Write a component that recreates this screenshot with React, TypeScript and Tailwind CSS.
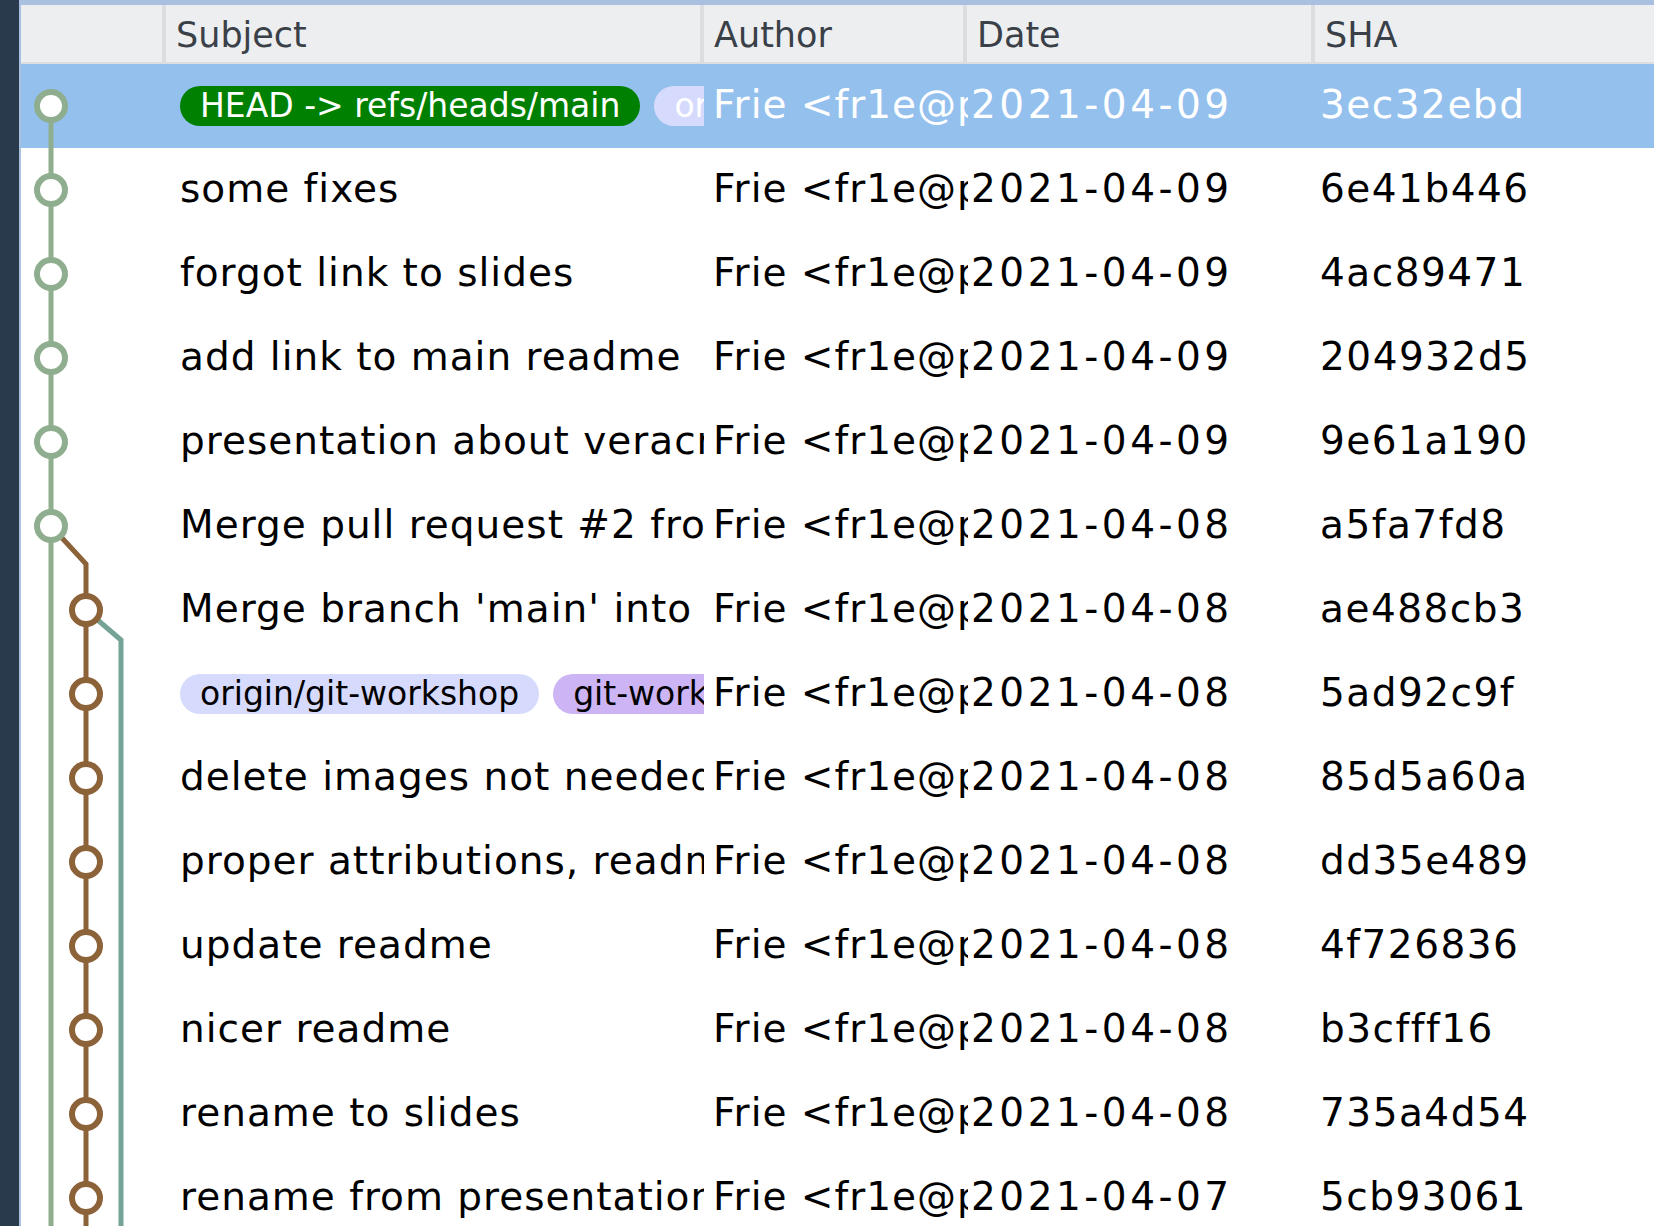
import React from "react";

const rows = [
  { s: "", a: "Frie <fr1e@protonmail", d: "2021-04-09", h: "3ec32ebd", sel: true, badges: "head" },
  { s: "some fixes", a: "Frie <fr1e@protonmail", d: "2021-04-09", h: "6e41b446" },
  { s: "forgot link to slides", a: "Frie <fr1e@protonmail", d: "2021-04-09", h: "4ac89471" },
  { s: "add link to main readme", a: "Frie <fr1e@protonmail", d: "2021-04-09", h: "204932d5" },
  { s: "presentation about veracrypt", a: "Frie <fr1e@protonmail", d: "2021-04-09", h: "9e61a190" },
  { s: "Merge pull request #2 from fr1e/git-workshop", a: "Frie <fr1e@protonmail", d: "2021-04-08", h: "a5fa7fd8" },
  { s: "Merge branch 'main' into git-workshop", a: "Frie <fr1e@protonmail", d: "2021-04-08", h: "ae488cb3" },
  { s: "", a: "Frie <fr1e@protonmail", d: "2021-04-08", h: "5ad92c9f", badges: "ws" },
  { s: "delete images not needed", a: "Frie <fr1e@protonmail", d: "2021-04-08", h: "85d5a60a" },
  { s: "proper attributions, readme", a: "Frie <fr1e@protonmail", d: "2021-04-08", h: "dd35e489" },
  { s: "update readme", a: "Frie <fr1e@protonmail", d: "2021-04-08", h: "4f726836" },
  { s: "nicer readme", a: "Frie <fr1e@protonmail", d: "2021-04-08", h: "b3cfff16" },
  { s: "rename to slides", a: "Frie <fr1e@protonmail", d: "2021-04-08", h: "735a4d54" },
  { s: "rename from presentation", a: "Frie <fr1e@protonmail", d: "2021-04-07", h: "5cb93061" },
];

const G = "#8fae8f", B = "#8c6239", T = "#76a398";

function Graph() {
  const cy = (i: number) => 42 + 84 * i;
  const H = 84 * 14;
  const nodes = [];
  for (let i = 0; i <= 5; i++) nodes.push({ x: 30, y: cy(i), c: G });
  for (let i = 6; i <= 13; i++) nodes.push({ x: 65, y: cy(i), c: B });
  return (
    <svg width="120" height={H} className="absolute left-0 top-0" style={{ pointerEvents: "none" }}>
      <line x1="30" y1={cy(0)} x2="30" y2={H} stroke={G} strokeWidth="5" />
      <polyline points={`30,${cy(5)} 65,${cy(5) + 38} 65,${H}`} fill="none" stroke={B} strokeWidth="5" />
      <polyline points={`65,${cy(6)} 100,${cy(6) + 30} 100,${H}`} fill="none" stroke={T} strokeWidth="5" />
      {nodes.map((n, i) => (
        <circle key={i} cx={n.x} cy={n.y} r="14" fill="white" stroke={n.c} strokeWidth="6" />
      ))}
    </svg>
  );
}

export default function App() {
  return (
    <div className="flex w-[1654px] h-[1226px] overflow-hidden bg-white" style={{ fontFamily: '"DejaVu Sans", sans-serif' }}>
      <div className="w-[19px] shrink-0 bg-[#283a4c]" />
      <div className="flex-1 flex flex-col border-t-[5px] border-[#a9c0e0] border-l-2 border-l-[#a9c0e0]">
        <div className="flex h-[59px] bg-[#eceef0] border-b-2 border-[#dcdde0] text-[35px] text-[#3a4048]">
          <div className="w-[145px] shrink-0 border-r-4 border-[#dcdde0]" />
          <div className="w-[538px] shrink-0 border-r-4 border-[#dcdde0] pl-[10px] flex items-center pt-[4px]">Subject</div>
          <div className="w-[263px] shrink-0 border-r-4 border-[#dcdde0] pl-[10px] flex items-center pt-[4px]">Author</div>
          <div className="w-[348px] shrink-0 border-r-4 border-[#dcdde0] pl-[10px] flex items-center pt-[4px]">Date</div>
          <div className="flex-1 pl-[10px] flex items-center pt-[4px]">SHA</div>
        </div>
        <div className="relative flex flex-col">
          {rows.map((r, i) => (
            <div key={i} className={`flex h-[84px] items-center text-[39px] tracking-[1px] ${r.sel ? "bg-[#94c0ee] text-white" : "text-black"}`}>
              <div className="w-[159px] shrink-0" />
              <div className="w-[524px] shrink-0 overflow-hidden whitespace-nowrap flex items-center gap-[14px]">
                {r.badges === "head" && (
                  <>
                    <span className="shrink-0 rounded-full bg-[#008000] text-white px-[20px] text-[33px] tracking-[0px] leading-[40px]">HEAD -&gt; refs/heads/main</span>
                    <span className="shrink-0 rounded-full bg-[#d6dafc] text-white px-[20px] text-[33px] tracking-[0px] leading-[40px]">origin/main</span>
                  </>
                )}
                {r.badges === "ws" && (
                  <>
                    <span className="shrink-0 rounded-full bg-[#d6dafc] text-black px-[20px] text-[33px] tracking-[0px] leading-[40px]">origin/git-workshop</span>
                    <span className="shrink-0 rounded-full bg-[#cdb5f5] text-black px-[20px] text-[33px] tracking-[0px] leading-[40px]">git-workshop</span>
                  </>
                )}
                {!r.badges && <span>{r.s}</span>}
              </div>
              <div className="w-[264px] shrink-0 overflow-hidden whitespace-nowrap pl-[9px]">{r.a}</div>
              <div className="w-[352px] shrink-0 overflow-hidden whitespace-nowrap pl-[3px] tracking-[3.5px]">{r.d}</div>
              <div className="flex-1 overflow-hidden whitespace-nowrap tracking-[1.5px]">{r.h}</div>
            </div>
          ))}
          <Graph />
        </div>
      </div>
    </div>
  );
}
